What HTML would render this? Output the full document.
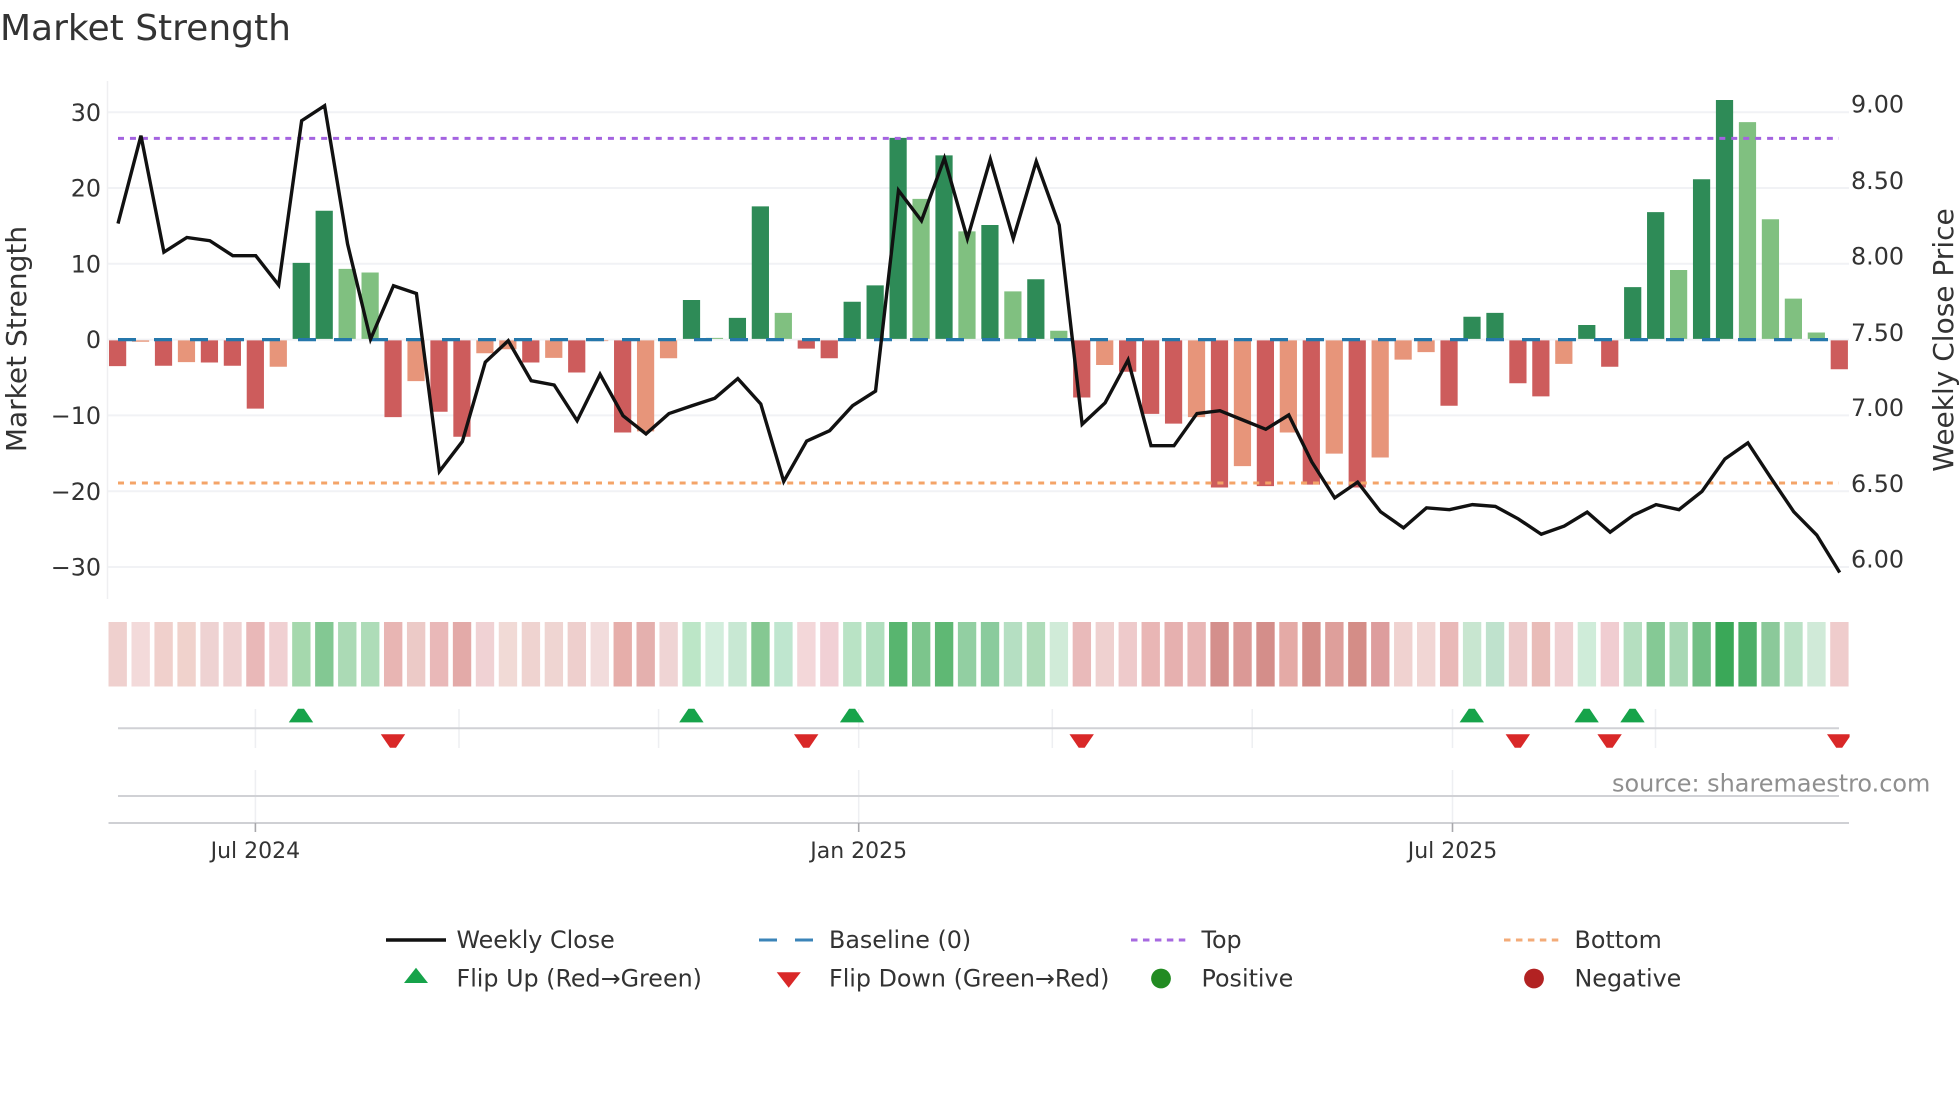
<!DOCTYPE html>
<html><head><meta charset="utf-8"><title>Market Strength</title>
<style>
html,body{margin:0;padding:0;background:#fff;width:1960px;height:1102px;overflow:hidden}
svg{position:absolute;left:0;top:0;display:block}
text{font-family:"DejaVu Sans","Liberation Sans",sans-serif;fill:#333}
.t{font-size:23.8px}
.x{font-size:22px;text-anchor:middle}
.a{font-size:28px;text-anchor:middle}
.l{text-anchor:end}
</style></head><body>
<svg width="1960" height="1102" viewBox="0 0 1960 1102" xmlns="http://www.w3.org/2000/svg">
<rect width="1960" height="1102" fill="#fff"/>
<text x="0" y="40" style="font-size:36px" fill="#333">Market Strength</text>

<!-- grid -->
<g stroke="#f1f2f5" stroke-width="2" fill="none">
<path d="M108 112.2H1849M108 188H1849M108 263.8H1849M108 339.6H1849M108 415.4H1849M108 491.2H1849M108 567H1849"/>
</g>
<path d="M107.5 81V599" stroke="#efeff1" stroke-width="1.5" fill="none"/>

<!-- bars -->
<g transform="translate(117.6,60) scale(22.956,.35714)" fill="none" stroke-width=".75">
<path stroke="#cd5c5c" d="M0 785V857M2 785V856M4 785V847M5 785V856M6 785V976M12 785V1000M14 785V985M15 785V1055M18 785V847M20 785V875M22 785V1043M30 785V808M31 785V835M42 785V945M44 785V873M45 785V991M46 785V1018M48 785V1197M50 785V1193M52 785V1189M54 785V1197M58 785V968M61 785V905M62 785V942M65 785V859M75 785V866"/>
<path stroke="#e7957a" d="M1 785V789M3 785V846M7 785V859M13 785V899M16 785V821M17 785V810M19 785V834M21 785V787M23 785V1040M24 785V835M43 785V854M47 785V1000M49 785V1137M51 785V1043M53 785V1102M55 785V1113M56 785V839M57 785V818M63 785V851"/>
<path stroke="#2e8b57" d="M8 568V781M9 422V781M25 672V781M27 722V781M28 410V781M32 677V781M33 631V781M34 218V781M36 267V781M38 462V781M40 614V781M59 719V781M60 708V781M64 742V781M66 636V781M67 426V781M69 334V781M70 112V781"/>
<path stroke="#80c080" d="M10 585V781M11 595V781M26 778V781M29 708V781M35 389V781M37 480V781M39 648V781M41 758V781M68 588V781M71 174V781M72 446V781M73 668V781M74 763V781"/>
</g>

<!-- reference lines -->
<path d="M118 138.4H1839" stroke="#a463e0" stroke-width="3" stroke-dasharray="6 5.95" fill="none"/>
<path d="M118 483H1839" stroke="#f4a468" stroke-width="3" stroke-dasharray="6 5.95" fill="none"/>
<path d="M118 339.6H1839" stroke="#2577ab" stroke-width="3.2" stroke-dasharray="18 18" fill="none"/>

<!-- close line -->
<g transform="translate(118,60) scale(22.956,.35714)">
<polyline vector-effect="non-scaling-stroke" fill="none" stroke="#111" stroke-width="3.4" stroke-linejoin="miter" points="0,458 1,212 2,538 3,497 4,506 5,548 6,548 7,630 8,170 9,128 10,515 11,782 12,632 13,654 14,1152 15,1068 16,846 17,786 18,898 19,910 20,1010 21,880 22,996 23,1047 24,990 25,968 26,947 27,892 28,963 29,1180 30,1067 31,1038 32,968 33,927 34,365 35,450 36,275 37,500 38,278 39,500 40,284 41,462 42,1020 43,960 44,840 45,1080 46,1080 47,990 48,982 49,1008 50,1034 51,994 52,1125 53,1226 54,1182 55,1265 56,1310 57,1254 58,1259 59,1245 60,1250 61,1285 62,1328 63,1305 64,1266 65,1322 66,1275 67,1245 68,1259 69,1208 70,1117 71,1072 72,1170 73,1265 74,1330 75,1435"/>
</g>

<!-- ticks -->
<g class="t">
<text class="l" x="101" y="121">30</text>
<text class="l" x="101" y="196.6">20</text>
<text class="l" x="101" y="272.4">10</text>
<text class="l" x="101" y="348.2">0</text>
<text class="l" x="101" y="424">−10</text>
<text class="l" x="101" y="499.8">−20</text>
<text class="l" x="101" y="575.6">−30</text>
<text x="1851" y="112.6">9.00</text>
<text x="1851" y="188.8">8.50</text>
<text x="1851" y="264.6">8.00</text>
<text x="1851" y="340.8">7.50</text>
<text x="1851" y="416">7.00</text>
<text x="1851" y="492">6.50</text>
<text x="1851" y="567.6">6.00</text>
</g>
<text class="a" transform="translate(26,339) rotate(-90)">Market Strength</text>
<text class="a" transform="translate(1953,340) rotate(-90)">Weekly Close Price</text>

<!-- heat strip -->
<g transform="translate(117.7,622) scale(22.956,1)" stroke-width=".8" fill="none">
<path stroke="#efd0ce" d="M0 0V64.5"/><path stroke="#f3dada" d="M1 0V64.5"/><path stroke="#f0d0cc" d="M2 0V64.5"/><path stroke="#f0d2cc" d="M3 0V64.5"/><path stroke="#eed2d2" d="M4 0V64.5"/><path stroke="#efd2d2" d="M5 0V64.5"/><path stroke="#e9b8b8" d="M6 0V64.5"/><path stroke="#f0d0d2" d="M7 0V64.5"/><path stroke="#a5d8ad" d="M8 0V64.5"/><path stroke="#83c893" d="M9 0V64.5"/>
<path stroke="#abdab5" d="M10 0V64.5"/><path stroke="#aedcb8" d="M11 0V64.5"/><path stroke="#e8b5b3" d="M12 0V64.5"/><path stroke="#eccac7" d="M13 0V64.5"/><path stroke="#e9b8b8" d="M14 0V64.5"/><path stroke="#e3aaa8" d="M15 0V64.5"/><path stroke="#f0d2d4" d="M16 0V64.5"/><path stroke="#f1dad6" d="M17 0V64.5"/><path stroke="#efd3d0" d="M18 0V64.5"/><path stroke="#efd5d2" d="M19 0V64.5"/>
<path stroke="#eecfcd" d="M20 0V64.5"/><path stroke="#f2dcdc" d="M21 0V64.5"/><path stroke="#e6aeaa" d="M22 0V64.5"/><path stroke="#e4b0ae" d="M23 0V64.5"/><path stroke="#efd4d4" d="M24 0V64.5"/><path stroke="#bce6c7" d="M25 0V64.5"/><path stroke="#d3eedd" d="M26 0V64.5"/><path stroke="#c8e8d3" d="M27 0V64.5"/><path stroke="#85c892" d="M28 0V64.5"/><path stroke="#bfe6cf" d="M29 0V64.5"/>
<path stroke="#f3d7d9" d="M30 0V64.5"/><path stroke="#f1d0d5" d="M31 0V64.5"/><path stroke="#b9e3c5" d="M32 0V64.5"/><path stroke="#b0dfbe" d="M33 0V64.5"/><path stroke="#58b56f" d="M34 0V64.5"/><path stroke="#7cc58c" d="M35 0V64.5"/><path stroke="#5fb874" d="M36 0V64.5"/><path stroke="#92cfa2" d="M37 0V64.5"/><path stroke="#8acb9d" d="M38 0V64.5"/><path stroke="#b5dfc2" d="M39 0V64.5"/>
<path stroke="#afdcb9" d="M40 0V64.5"/><path stroke="#d0ebd8" d="M41 0V64.5"/><path stroke="#e9baba" d="M42 0V64.5"/><path stroke="#efd1d0" d="M43 0V64.5"/><path stroke="#eecacb" d="M44 0V64.5"/><path stroke="#e9b6b5" d="M45 0V64.5"/><path stroke="#e6b0af" d="M46 0V64.5"/><path stroke="#e8b6b5" d="M47 0V64.5"/><path stroke="#d48f8c" d="M48 0V64.5"/><path stroke="#db9996" d="M49 0V64.5"/>
<path stroke="#d48e8a" d="M50 0V64.5"/><path stroke="#e4aaa6" d="M51 0V64.5"/><path stroke="#d48d88" d="M52 0V64.5"/><path stroke="#de9f9b" d="M53 0V64.5"/><path stroke="#d48d87" d="M54 0V64.5"/><path stroke="#dd9d9d" d="M55 0V64.5"/><path stroke="#f0d2d0" d="M56 0V64.5"/><path stroke="#f1d6d4" d="M57 0V64.5"/><path stroke="#e9b9b8" d="M58 0V64.5"/><path stroke="#c8e6d0" d="M59 0V64.5"/>
<path stroke="#bfe2cd" d="M60 0V64.5"/><path stroke="#eccaca" d="M61 0V64.5"/><path stroke="#e9bcb8" d="M62 0V64.5"/><path stroke="#f0d0d2" d="M63 0V64.5"/><path stroke="#cfecd9" d="M64 0V64.5"/><path stroke="#f0cdd1" d="M65 0V64.5"/><path stroke="#b5dfc0" d="M66 0V64.5"/><path stroke="#85c995" d="M67 0V64.5"/><path stroke="#a8d8b4" d="M68 0V64.5"/><path stroke="#72bf85" d="M69 0V64.5"/>
<path stroke="#3aa858" d="M70 0V64.5"/><path stroke="#4cae67" d="M71 0V64.5"/><path stroke="#8bc99a" d="M72 0V64.5"/><path stroke="#bbe2c6" d="M73 0V64.5"/><path stroke="#d0ead8" d="M74 0V64.5"/><path stroke="#efcccc" d="M75 0V64.5"/>
</g>

<!-- flip panel -->
<path d="M255.4 709V748M459 709V748M658.6 709V748M858.7 709V748M1052.3 709V748M1252.2 709V748M1452.5 709V748M1655.5 709V748" stroke="#eeeff2" stroke-width="1.5" fill="none"/>
<path d="M118 728.3H1839" stroke="#d0d1d5" stroke-width="2" fill="none"/>
<g fill="#16a34a">
<polygon transform="translate(301,0)" points="-12.2,722.4 -3,708.7 3,708.7 12.2,722.4"/>
<polygon transform="translate(691.4,0)" points="-12.2,722.4 -3,708.7 3,708.7 12.2,722.4"/>
<polygon transform="translate(852.1,0)" points="-12.2,722.4 -3,708.7 3,708.7 12.2,722.4"/>
<polygon transform="translate(1471.8,0)" points="-12.2,722.4 -3,708.7 3,708.7 12.2,722.4"/>
<polygon transform="translate(1586.6,0)" points="-12.2,722.4 -3,708.7 3,708.7 12.2,722.4"/>
<polygon transform="translate(1632.5,0)" points="-12.2,722.4 -3,708.7 3,708.7 12.2,722.4"/>
</g>
<g fill="#d92828">
<polygon transform="translate(393,0)" points="-12.2,734.3 12.2,734.3 3,747.8 -3,747.8"/>
<polygon transform="translate(806.2,0)" points="-12.2,734.3 12.2,734.3 3,747.8 -3,747.8"/>
<polygon transform="translate(1081.7,0)" points="-12.2,734.3 12.2,734.3 3,747.8 -3,747.8"/>
<polygon transform="translate(1517.8,0)" points="-12.2,734.3 12.2,734.3 3,747.8 -3,747.8"/>
<polygon transform="translate(1609.6,0)" points="-12.2,734.3 12.2,734.3 3,747.8 -3,747.8"/>
<polygon transform="translate(1839.2,0)" points="-12.2,734.3 10.4,734.3 10.4,737 3,747.8 -3,747.8"/>
</g>

<!-- lower panel -->
<path d="M255.4 770V822M858.7 770V822M1452.5 770V822" stroke="#eeeff2" stroke-width="1.5" fill="none"/>
<path d="M118 796H1839" stroke="#d0d1d5" stroke-width="2" fill="none"/>
<path d="M108.5 823H1849" stroke="#cfd0d4" stroke-width="2" fill="none"/>
<path d="M255.4 823V832M858.7 823V832M1452.5 823V832" stroke="#a8a8ac" stroke-width="1.6" fill="none"/>
<text x="1612" y="791.7" style="font-size:23.95px;fill:#8f8f8f">source: sharemaestro.com</text>
<text class="x" x="255.4" y="858">Jul 2024</text>
<text class="x" x="858.7" y="858">Jan 2025</text>
<text class="x" x="1452.5" y="858">Jul 2025</text>

<!-- legend -->
<path d="M386 940H446" stroke="#111" stroke-width="3.4" fill="none"/>
<path d="M759 940H813" stroke="#3b84b8" stroke-width="3" stroke-dasharray="18 18" fill="none"/>
<path d="M1131 940H1186" stroke="#a76ae0" stroke-width="3" stroke-dasharray="6.5 5.45" fill="none"/>
<path d="M1504 940H1559" stroke="#f3ab78" stroke-width="3" stroke-dasharray="6.5 5.45" fill="none"/>
<polygon points="404,983 416,967.7 428,983" fill="#16a34a"/>
<polygon points="776.7,972.3 800.8,972.3 788.7,987.7" fill="#d92828"/>
<circle cx="1161" cy="978.5" r="9.9" fill="#228b22"/>
<circle cx="1534" cy="978.5" r="9.9" fill="#b22222"/>
<g class="t">
<text x="456.5" y="948.2">Weekly Close</text>
<text x="829" y="948.2">Baseline (0)</text>
<text x="1201.5" y="948.2">Top</text>
<text x="1574.5" y="948.2">Bottom</text>
<text x="456.5" y="986.4">Flip Up (Red→Green)</text>
<text x="829" y="986.4">Flip Down (Green→Red)</text>
<text x="1201.5" y="986.4">Positive</text>
<text x="1574.5" y="986.4">Negative</text>
</g>
</svg>
</body></html>
